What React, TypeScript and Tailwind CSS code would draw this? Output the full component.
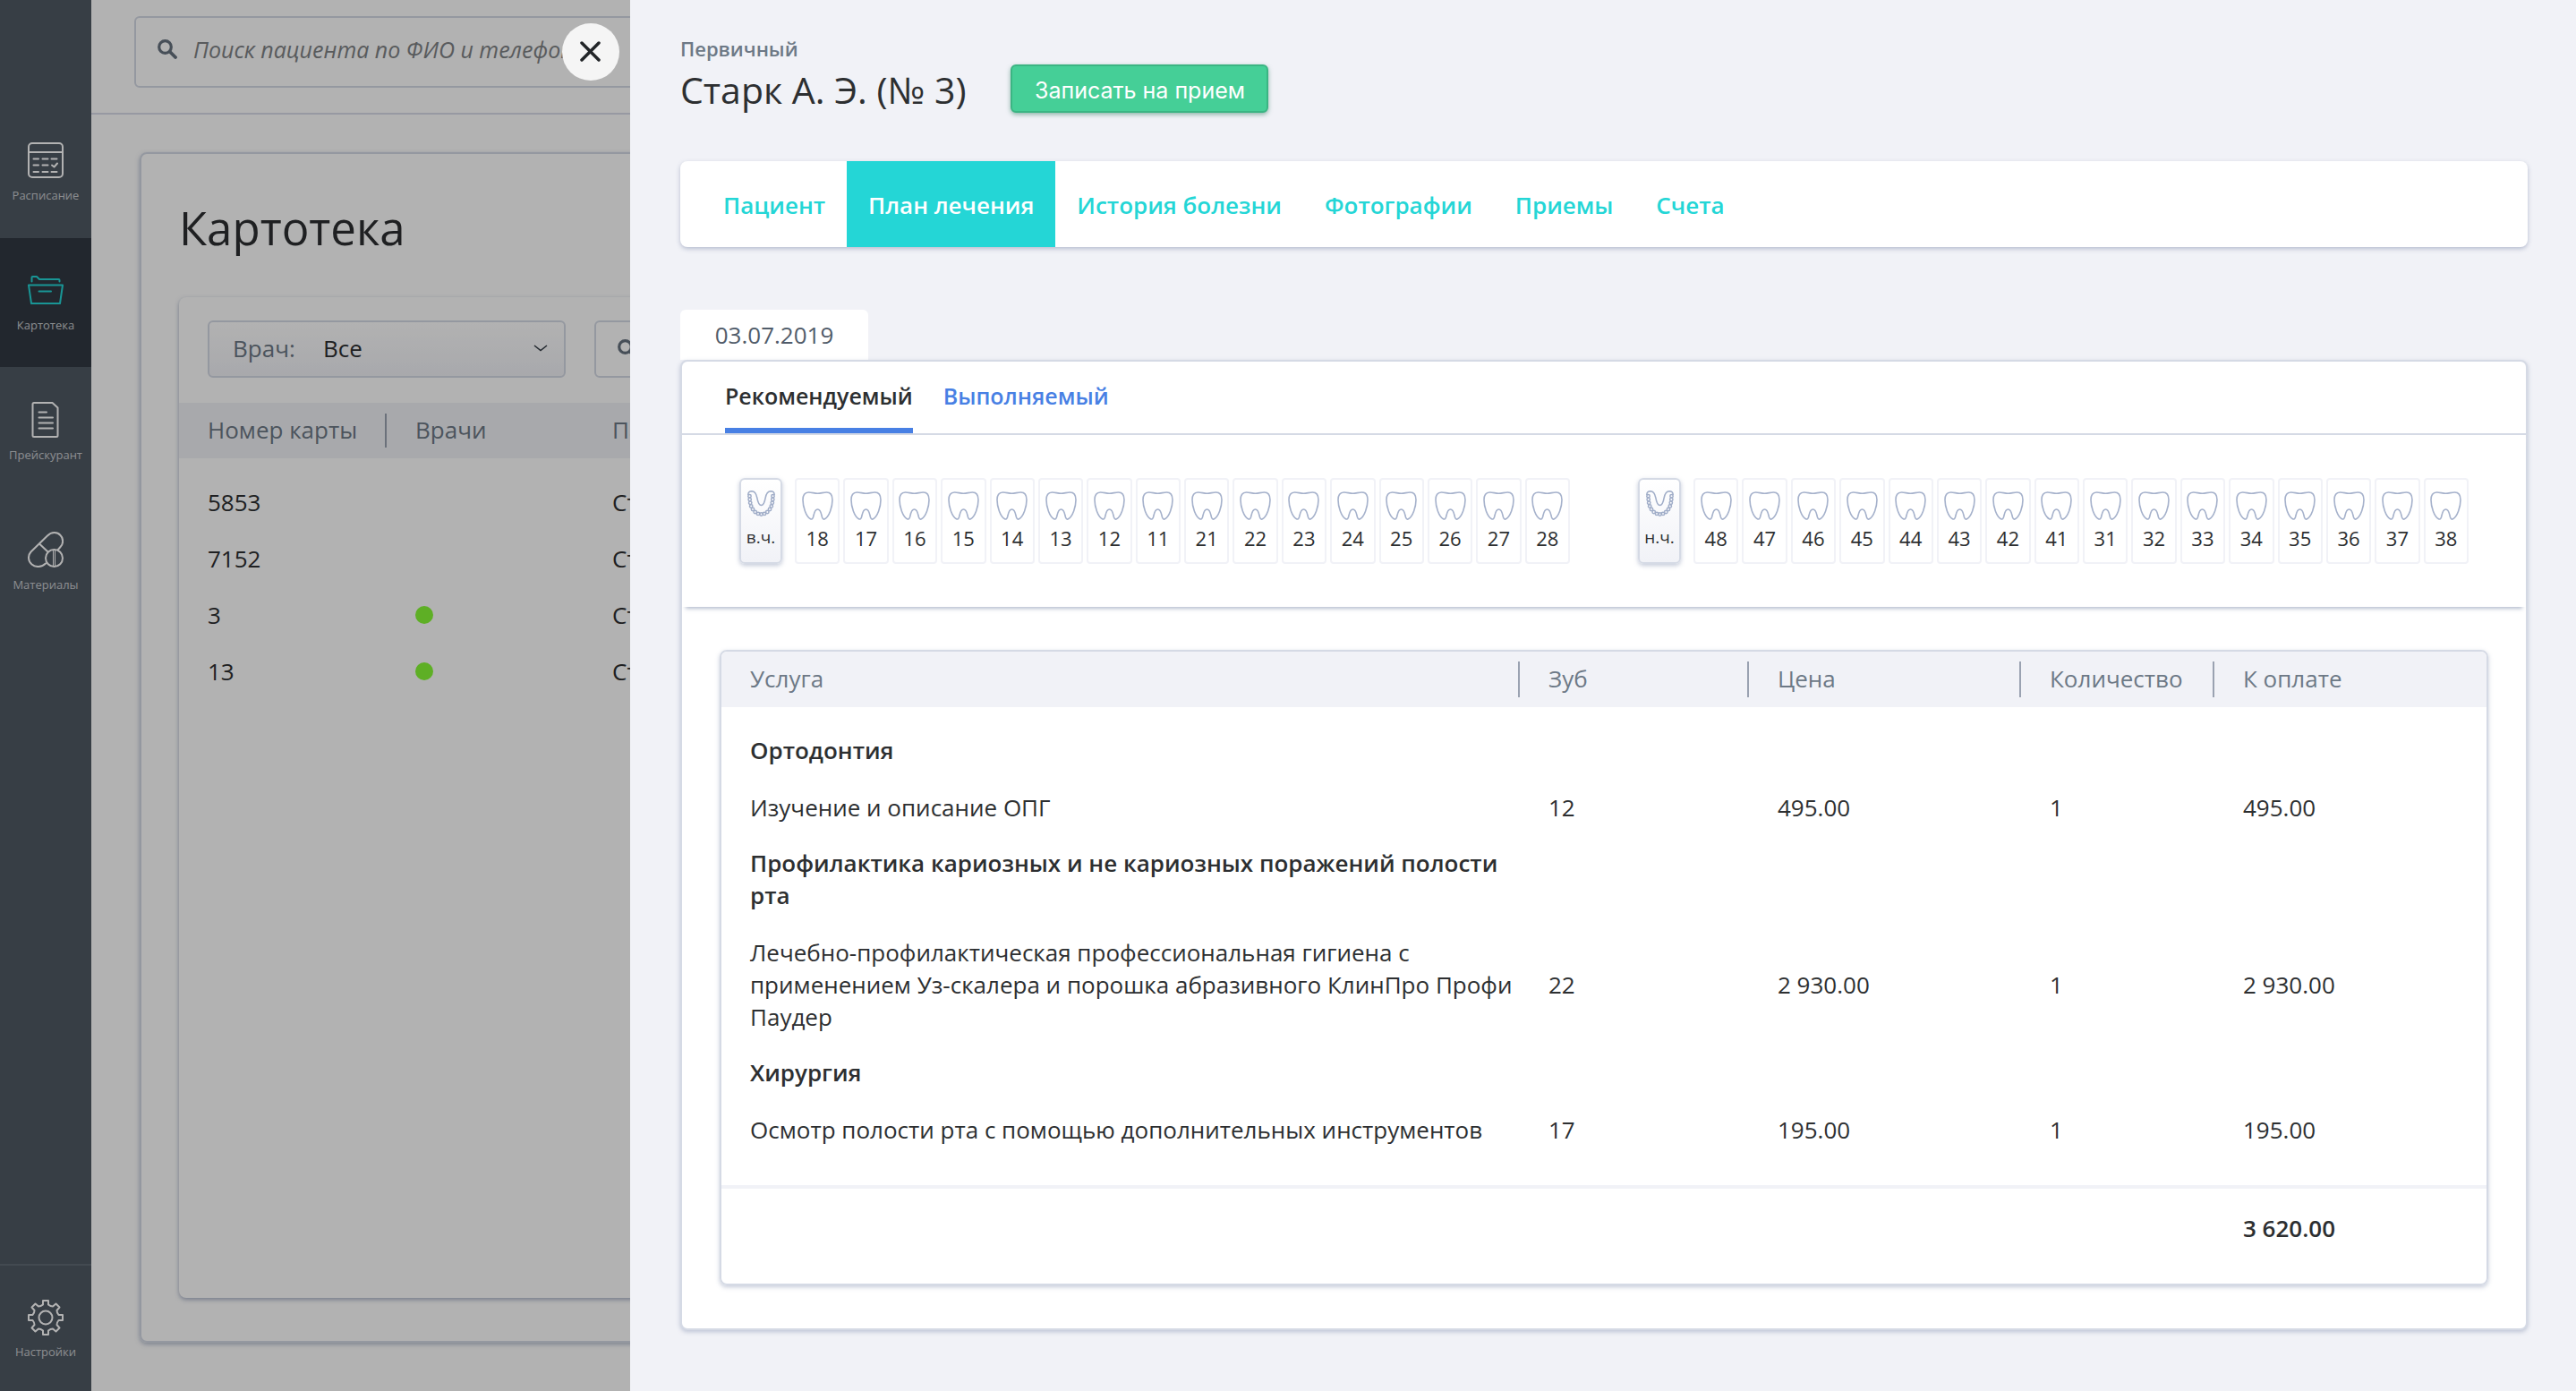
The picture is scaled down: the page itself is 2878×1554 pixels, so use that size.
import React from "react";

const upperTeeth = [18, 17, 16, 15, 14, 13, 12, 11, 21, 22, 23, 24, 25, 26, 27, 28];
const lowerTeeth = [48, 47, 46, 45, 44, 43, 42, 41, 31, 32, 33, 34, 35, 36, 37, 38];

const tabs = ["Пациент", "План лечения", "История болезни", "Фотографии", "Приемы", "Счета"];

const patients = [
  { card: "5853", active: false },
  { card: "7152", active: false },
  { card: "3", active: true },
  { card: "13", active: true },
];

const groups = [
  {
    title: "Ортодонтия",
    name: "Изучение и описание ОПГ",
    tooth: "12",
    price: "495.00",
  },
  {
    title: "Профилактика кариозных и не кариозных поражений полости рта",
    name: "Лечебно-профилактическая профессиональная гигиена с применением Уз-скалера и порошка абразивного КлинПро Профи Паудер",
    tooth: "22",
    price: "2 930.00",
  },
  {
    title: "Хирургия",
    name: "Осмотр полости рта с помощью дополнительных инструментов",
    tooth: "17",
    price: "195.00",
  },
];

function CalendarIcon() {
  return (
    <svg width="40" height="40" viewBox="0 0 40 40" fill="none" stroke="currentColor" strokeWidth="2" strokeLinecap="round" strokeLinejoin="round" aria-hidden="true">
      <rect x="1" y="1" width="38" height="38" rx="4" />
      <path d="M1 11H39" />
      <path d="M6.5 18.500H12M16.500 18.500H22.500M26.500 18.500H32.500M6.500 25.500H12M16.500 25.500H22.500M6.500 33H12M16.500 33H22.500M26.500 33H32.500" />
      <path d="M27 25.500L29.500 27.500L33 23.500" />
    </svg>
  );
}

function FolderIcon() {
  return (
    <svg width="40" height="40" viewBox="0 0 40 40" fill="none" stroke="currentColor" strokeWidth="2" strokeLinecap="round" strokeLinejoin="round" aria-hidden="true">
      <path d="M1 14.500H39L36 35H4L1 14.500Z" />
      <path d="M4.500 10.500V6Q4.500 5 5.500 5H10L13 8H34.500Q35.500 8 35.500 9V10.500" />
      <path d="M12.500 21.500H26" />
    </svg>
  );
}

function DocumentIcon() {
  return (
    <svg width="40" height="40" viewBox="0 0 40 40" fill="none" stroke="currentColor" strokeWidth="2" strokeLinecap="round" strokeLinejoin="round" aria-hidden="true">
      <path d="M7 1H27.500L33.500 6.500V37.500Q33.500 39 32 39H7Q5.500 39 5.500 37.500V2.500Q5.500 1 7 1Z" />
      <path d="M12.500 11.500H21M12.500 17.500H28M12.500 23.500H28M12.500 29.500H28" />
    </svg>
  );
}

function PillsIcon() {
  return (
    <svg width="40" height="40" viewBox="0 0 40 40" fill="none" stroke="currentColor" strokeWidth="2" strokeLinecap="round" strokeLinejoin="round" aria-hidden="true">
      <path d="M20 35.500C15.500 40 8.500 40 4.500 36.500C0 32.500 0 26.500 3.500 22.500L22 4.500C26.500 0 33 0 36.500 4C40 7.500 40 13.500 36.500 17L33.500 20.500" />
      <path d="M13.500 14L22.500 22.500" />
      <circle cx="29.500" cy="29.500" r="9.500" />
      <path d="M28.500 20.500V38.500M30.500 20.500V38.500" strokeWidth="1" />
    </svg>
  );
}

function GearIcon() {
  return (
    <svg width="40" height="40" viewBox="0 0 40 40" fill="none" stroke="currentColor" strokeWidth="2" strokeLinejoin="round" aria-hidden="true">
      <circle cx="20" cy="20" r="7.500" />
      <path d="M17 1H23V5.500Q25.500 7.500 28 7.500L31.500 4.500L35.500 8.500L32.500 12Q32.500 14.500 34.500 17H39V23H34.500Q32.500 25.500 32.500 28L35.500 31.500L31.500 35.500L28 32.500Q25.500 32.500 23 34.500V39H17V34.500Q14.500 32.500 12 32.500L8.500 35.500L4.500 31.500L7.500 28Q7.500 25.500 5.500 23H1V17H5.500Q7.500 14.500 7.500 12L4.500 8.500L8.500 4.500L12 7.500Q14.500 7.500 17 5.500Z" />
    </svg>
  );
}

function SearchIcon() {
  return (
    <svg width="22" height="22" viewBox="0 0 22 22" fill="none" stroke="#66727f" strokeLinecap="round" aria-hidden="true">
      <circle cx="8.500" cy="8.500" r="6.800" strokeWidth="3.200" />
      <path d="M14 14L20 20" strokeWidth="3.800" />
    </svg>
  );
}

function ToothIcon() {
  return (
    <svg width="35" height="32" viewBox="0 0 35 32" fill="none" stroke="#a5b1cb" strokeWidth="1.600" strokeLinejoin="round" aria-hidden="true">
      <path d="M17.500 2.200C14 2.200 11 1 7.500 1C3 1 1 4 1 9.500C1 17 4.500 28 9.500 30.800C11 31.600 12 30.500 12.600 28.500C13.600 24.500 14 20 17.500 20C21 20 21.400 24.500 22.400 28.500C23 30.500 24 31.600 25.500 30.800C30.500 28 34 17 34 9.500C34 4 32 1 27.500 1C24 1 21 2.200 17.500 2.200Z" />
    </svg>
  );
}

const jawTeeth = [
  [2.5, 6.2], [2.7, 10], [3.2, 13.800], [4.2, 17.500], [6, 21], [8.700, 24], [12, 25.900],
];

function JawIcon() {
  return (
    <svg width="31" height="29" viewBox="0 0 31 29" fill="none" stroke="#a0adc8" strokeWidth="1.500" aria-hidden="true">
      <path d="M0.800 5C0.800 1.500 3 0.800 5 0.800C8.500 1 10 4 10.800 8C11.600 12.500 12.500 16.500 15.500 16.500C18.500 16.500 19.400 12.500 20.200 8C21 4 22.500 1 26 0.800C28 0.800 30.200 1.500 30.200 5" />
      {jawTeeth.map(([x, y]) => (
        <React.Fragment key={y}>
          <circle cx={x} cy={y} r="1.700" />
          <circle cx={31 - x} cy={y} r="1.700" />
        </React.Fragment>
      ))}
      <circle cx="15.500" cy="26.500" r="1.700" />
    </svg>
  );
}

function NavItem({ label, icon, active = false }: { label: string; icon: React.ReactNode; active?: boolean }) {
  return (
    <a
      href="#"
      className={
        active
          ? "flex h-36 flex-col items-center bg-[#313943] pt-[38px] text-[#24d6d6]"
          : "flex h-36 flex-col items-center pt-[38px] text-white"
      }
    >
      {icon}
      <span className="mt-[9px] text-[13px] leading-5 text-[#c8cbce]">{label}</span>
    </a>
  );
}

function TeethRow({ label, teeth }: { label: string; teeth: number[] }) {
  return (
    <div className="flex min-w-0 flex-1">
      <button
        type="button"
        className="mr-3.5 flex h-24 w-12 shrink-0 flex-col items-center rounded-md border-2 border-[#d5dae5] bg-linear-to-b from-white to-[#f1f2f7] pt-3 shadow-[0_2px_5px_rgba(110,125,160,0.4)]"
      >
        <JawIcon />
        <span className="mt-[9px] text-[19px] leading-7">{label}</span>
      </button>
      <div className="flex min-w-0 flex-1 gap-1">
        {teeth.map((tooth) => (
          <button
            key={tooth}
            type="button"
            className="flex h-24 min-w-0 flex-1 flex-col items-center rounded border-2 border-[#f1f2f7] bg-white pt-[13px]"
          >
            <ToothIcon />
            <span className="mt-1.5 text-[22px] leading-7">{tooth}</span>
          </button>
        ))}
      </div>
    </div>
  );
}

function Registry() {
  return (
    <main className="flex min-w-0 flex-1 flex-col bg-white">
      <header className="border-b-2 border-[#d9dce8] pt-[18px] pr-12 pb-7 pl-12">
        <label className="flex h-20 items-center gap-[18px] rounded-md border-2 border-[#d5dae5] bg-white pb-1.5 pl-6">
          <SearchIcon />
          <input
            type="search"
            aria-label="Поиск пациента"
            placeholder="Поиск пациента по ФИО и телефону"
            className="min-w-0 flex-1 text-[25px] leading-9 italic outline-none placeholder:text-[#808386]"
          />
        </label>
      </header>
      <section className="mx-[54px] mt-[42px] mb-[54px] flex flex-1 flex-col rounded-lg border-2 border-[#d5dae5] px-[42px] pt-[50px] pb-12 shadow-[0_2px_5px_rgba(110,125,160,0.5)]">
        <h1 className="mb-[46px] text-[51px] leading-[64px]">Картотека</h1>
        <div className="flex-1 rounded-lg shadow-[0_2px_5px_rgba(110,125,160,0.6)]">
          <div className="flex gap-8 px-8 pt-[26px] pb-7">
            <label className="relative flex h-16 w-[400px] items-center rounded-md border-2 border-[#d5dae5] bg-linear-to-b from-white to-[#f1f2f7] pb-0.5 pl-[26px] text-[26px]">
              <span className="w-[101px] text-[#6d7986]">Врач:</span>
              <select className="flex-1 appearance-none bg-transparent outline-none" defaultValue="all">
                <option value="all">Все</option>
              </select>
              <svg className="pointer-events-none absolute right-[18px]" width="16" height="10" viewBox="0 0 16 10" fill="none" stroke="#313943" strokeWidth="1.500" aria-hidden="true">
                <path d="M1 2L8 7.500L15 2" />
              </svg>
            </label>
            <label className="flex h-16 flex-1 items-center gap-5 rounded-md border-2 border-[#d5dae5] bg-white pl-6">
              <SearchIcon />
              <input type="search" aria-label="Поиск по картотеке" className="min-w-0 flex-1 text-[26px] outline-none" />
            </label>
          </div>
          <table className="w-full table-fixed text-left text-[26px] leading-9">
            <colgroup>
              <col className="w-[230px]" />
              <col className="w-[220px]" />
              <col />
            </colgroup>
            <thead className="bg-[#f1f3f6] text-[#6d7986]">
              <tr className="h-[62px]">
                <th className="pb-0.5 pl-8 font-normal">Номер карты</th>
                <th className="p-0 font-normal">
                  <div className="border-l-2 border-[#9aa2b1] pb-0.5 pl-8">Врачи</div>
                </th>
                <th className="pb-0.5 pl-[34px] font-normal">Пациент</th>
              </tr>
            </thead>
            <tbody className="before:block before:h-[17px]">
              {patients.map((p) => (
                <tr key={p.card} className="h-[63px]">
                  <td className="pl-8">{p.card}</td>
                  <td className="pl-[34px]">
                    {p.active && <span className="block size-5 rounded-full bg-[#87fb36]" />}
                  </td>
                  <td className="pl-[34px]">Старк</td>
                </tr>
              ))}
            </tbody>
          </table>
        </div>
      </section>
    </main>
  );
}

function HeadCell({ children }: { children: React.ReactNode }) {
  return (
    <th className="p-0 font-normal">
      <div className="flex h-10 items-center border-l-2 border-[#9aa2b1] pb-0.5 pl-8">{children}</div>
    </th>
  );
}

function PlanTable() {
  return (
    <div className="overflow-hidden rounded-lg border-2 border-[#d5dae5] shadow-[0_2px_5px_rgba(110,125,160,0.4)]">
      <table className="w-full table-fixed text-left text-[26px] leading-9">
        <colgroup>
          <col />
          <col className="w-[256px]" />
          <col className="w-[304px]" />
          <col className="w-[216px]" />
          <col className="w-[306px]" />
        </colgroup>
        <thead className="bg-[#f1f2f7] text-[#6d7986]">
          <tr className="h-[62px]">
            <th className="pb-0.5 pl-8 font-normal">Услуга</th>
            <HeadCell>Зуб</HeadCell>
            <HeadCell>Цена</HeadCell>
            <HeadCell>Количество</HeadCell>
            <HeadCell>К оплате</HeadCell>
          </tr>
        </thead>
        <tbody className="before:block before:h-[18px] after:block after:h-[30px]">
          {groups.map((g) => (
            <React.Fragment key={g.title}>
              <tr>
                <th scope="colgroup" className="pt-3 pb-3.5 pl-8 font-semibold">{g.title}</th>
                <td colSpan={4} />
              </tr>
              <tr>
                <td className="py-3.5 pl-8">{g.name}</td>
                <td className="pl-[34px]">{g.tooth}</td>
                <td className="pl-[34px]">{g.price}</td>
                <td className="pl-[34px]">1</td>
                <td className="pl-[34px]">{g.price}</td>
              </tr>
            </React.Fragment>
          ))}
        </tbody>
        <tfoot>
          <tr className="border-t-4 border-[#f1f2f7]">
            <td colSpan={4} />
            <td className="pt-[26px] pb-11 pl-[34px] font-semibold">3 620.00</td>
          </tr>
        </tfoot>
      </table>
    </div>
  );
}

function PatientDrawer() {
  return (
    <div className="min-w-0 flex-1 overflow-y-auto bg-[#f1f2f7] pt-9 pr-[54px] pb-16 pl-14">
      <p className="text-[22px] leading-9 font-semibold text-[#6d7986]">Первичный</p>
      <div className="flex items-start gap-[50px]">
        <h2 className="text-[41px] leading-[56px]">Старк А. Э. (№ 3)</h2>
        <button
          type="button"
          className="h-[54px] w-72 rounded-md border-2 border-[#3bb583] bg-[#45cf97] pt-1 font-[Inter,sans-serif] text-[25px] leading-8 text-white shadow-[0_2px_5px_rgba(40,120,90,0.5)]"
        >
          Записать на прием
        </button>
      </div>

      <nav className="mt-[52px] flex h-24 rounded-lg bg-white pl-6 text-[26px] font-semibold text-[#24d6d6] shadow-[0_2px_5px_rgba(110,125,160,0.45)]">
        {tabs.map((tab) => (
          <a
            key={tab}
            href="#"
            className={
              tab === "План лечения"
                ? "flex items-center bg-[#24d6d6] px-6 pt-0.5 text-white"
                : "flex items-center px-6 pt-0.5"
            }
          >
            {tab}
          </a>
        ))}
      </nav>

      <button type="button" className="mt-[70px] block h-14 w-[210px] rounded-t-md bg-white text-[26px] leading-9 text-[#515c6a]">
        03.07.2019
      </button>
      <section className="rounded-lg border-2 border-[#d5dae5] bg-white shadow-[0_2px_5px_rgba(110,125,160,0.4)]">
        <div className="flex h-[82px] gap-[34px] border-b-2 border-[#d5dae5] pl-12 text-[25px] font-semibold">
          <button type="button" className="border-b-6 border-[#4880e4] pt-1">Рекомендуемый</button>
          <button type="button" className="border-b-6 border-transparent pt-1 text-[#4880e4]">Выполняемый</button>
        </div>
        <div className="flex gap-[76px] px-16 py-12 shadow-[0_6px_4px_-4px_rgba(110,125,160,0.5)]">
          <TeethRow label="в.ч." teeth={upperTeeth} />
          <TeethRow label="н.ч." teeth={lowerTeeth} />
        </div>
        <div className="px-[42px] py-12">
          <PlanTable />
        </div>
      </section>
    </div>
  );
}

export default function App() {
  return (
    <div className="flex min-h-screen font-['Open_Sans',sans-serif] text-[#2d2f31]">
      <aside className="flex w-[102px] shrink-0 flex-col bg-[#505964] pt-[121px]">
        <nav className="flex flex-1 flex-col gap-px">
          <NavItem label="Расписание" icon={<CalendarIcon />} />
          <NavItem label="Картотека" icon={<FolderIcon />} active />
          <NavItem label="Прейскурант" icon={<DocumentIcon />} />
          <NavItem label="Материалы" icon={<PillsIcon />} />
        </nav>
        <div className="border-t-2 border-[#616a74]">
          <a href="#" className="flex h-[140px] flex-col items-center pt-[38px] text-white">
            <GearIcon />
            <span className="mt-2 text-[13px] leading-5 text-[#c8cbce]">Настройки</span>
          </a>
        </div>
      </aside>
      <Registry />

      <div role="dialog" aria-label="Карта пациента" className="fixed inset-0 flex bg-black/30">
        <div className="flex w-[704px] shrink-0 items-start justify-end pt-[26px] pr-3">
          <button type="button" aria-label="Закрыть" className="grid size-16 place-items-center rounded-full bg-[#f5f5f5]">
            <svg width="24" height="24" viewBox="0 0 24 24" fill="none" stroke="#222528" strokeWidth="3.500" strokeLinecap="round" aria-hidden="true">
              <path d="M2 2L21 21M21 2L2 21" />
            </svg>
          </button>
        </div>
        <PatientDrawer />
      </div>
    </div>
  );
}
